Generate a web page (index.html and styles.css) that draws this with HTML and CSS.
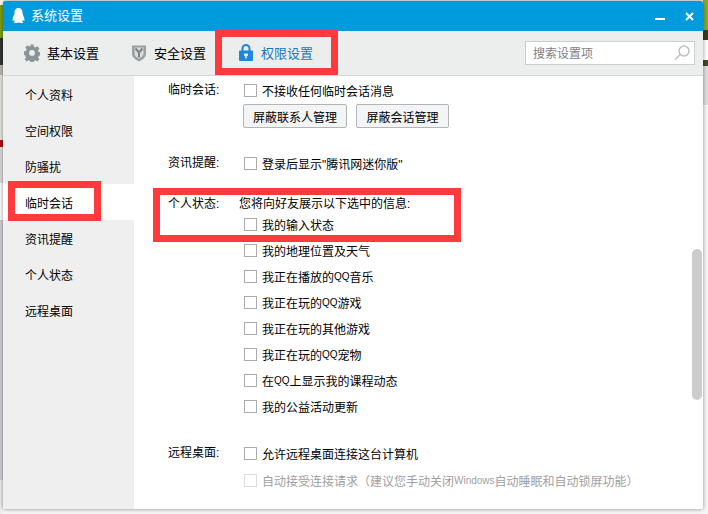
FILE: index.html
```html
<!DOCTYPE html>
<html lang="zh-CN">
<head>
<meta charset="utf-8">
<title>系统设置</title>
<link rel="stylesheet" href="styles.css">
</head>
<body>
<div class="window">
  <header class="titlebar">
    <svg class="logo" viewBox="0 0 13 15"><path d="M6.500 0C3.500 0 2.500 2.500 2.500 5 2.500 7 .5 9 .5 12c0 1.200 1 1 1.700 0 .3 1 .8 1.500.8 1.500C1.500 14 1 15 3 15c1.500 0 3-.2 3.500-.5.500.3 2 .5 3.500.5 2 0 1.500-1 0-1.500 0 0 .5-.5.800-1.500.7 1 1.700 1.200 1.700 0 0-3-2-5-2-7C10.500 2.500 9.500 0 6.500 0z"/></svg>
    <span class="title">系统设置</span>
    <span class="win-min"></span>
    <svg class="win-close" viewBox="0 0 9 9"><path d="M1 1l7 7M8 1L1 8"/></svg>
  </header>
  <nav class="toolbar">
    <a class="tab">
      <svg class="tab-icon" viewBox="0 0 16 18"><path class="gear" d="M6.500.5h3l.4 2.300 1.500.7 2-1.200 2 2.200-1.300 1.900.6 1.600 2.300.4v3l-2.300.4-.6 1.600 1.300 1.900-2 2.200-2-1.200-1.500.7-.4 2.300h-3l-.4-2.300-1.500-.7-2 1.200-2-2.200 1.300-1.900-.6-1.600L-.3 10.300v-3l2.300-.4.600-1.600L1.300 3.400l2-2.200 2 1.200 1.500-.7zM8 6a2.900 2.900 0 1 0 0 5.800A2.900 2.900 0 0 0 8 6z"/></svg>
      <span>基本设置</span>
    </a>
    <a class="tab">
      <svg class="tab-icon" viewBox="0 0 16 18"><path class="shield-o" d="M1 1.500h14v8.500c0 3-3.500 5.800-7 7.500-3.500-1.700-7-4.500-7-7.500z"/><path class="shield-i" d="M3.500 3.500h9v6.300c0 2-2.300 3.800-4.500 5-2.200-1.200-4.500-3-4.500-5z"/><path class="shield-y" d="M4.500 4.500L8 8.500l3.500-4M8 8.500v5"/></svg>
      <span>安全设置</span>
    </a>
    <a class="tab tab-active">
      <svg class="tab-icon" viewBox="0 0 16 18"><path class="lock-arc" d="M4.500 7V4.500a3.500 3.500 0 0 1 7 0V7"/><path class="lock-body" d="M2 6.500h12a1 1 0 0 1 1 1V16a1 1 0 0 1-1 1H2a1 1 0 0 1-1-1V7.500a1 1 0 0 1 1-1zM6.800 9.500a.8.8 0 0 0-.8.8v1a.8.8 0 0 0 .8.8h.4v2.400h1.600V12.100h.4a.8.8 0 0 0 .8-.8v-1a.8.8 0 0 0-.8-.8z"/></svg>
      <span>权限设置</span>
    </a>
    <div class="search">
      <span>搜索设置项</span>
      <svg class="search-icon" viewBox="0 0 16 15"><circle cx="10" cy="6" r="5"/><path d="M6.300 9.500L1 14.500"/></svg>
    </div>
  </nav>
  <div class="main">
    <aside class="sidebar">
      <div class="side-item">个人资料</div>
      <div class="side-item">空间权限</div>
      <div class="side-item">防骚扰</div>
      <div class="side-item side-active">临时会话</div>
      <div class="side-item">资讯提醒</div>
      <div class="side-item">个人状态</div>
      <div class="side-item">远程桌面</div>
    </aside>
    <section class="content">
      <div class="group group-chat">
        <div class="label">临时会话:</div>
        <div class="fields">
          <label class="opt"><i class="box"></i>不接收任何临时会话消息</label>
          <div class="buttons">
            <button class="btn btn-contact">屏蔽联系人管理</button>
            <button class="btn btn-session">屏蔽会话管理</button>
          </div>
        </div>
      </div>
      <div class="group group-news">
        <div class="label">资讯提醒:</div>
        <div class="fields">
          <label class="opt"><i class="box"></i>登录后显示"腾讯网迷你版"</label>
        </div>
      </div>
      <div class="group group-status">
        <div class="label label-short">个人状态:</div>
        <div class="fields">
          <div class="status-head">您将向好友展示以下选中的信息:</div>
          <label class="opt"><i class="box"></i>我的输入状态</label>
          <label class="opt"><i class="box"></i>我的地理位置及天气</label>
          <label class="opt"><i class="box"></i>我正在播放的<span class="latin">QQ</span>音乐</label>
          <label class="opt"><i class="box"></i>我正在玩的<span class="latin">QQ</span>游戏</label>
          <label class="opt"><i class="box"></i>我正在玩的其他游戏</label>
          <label class="opt"><i class="box"></i>我正在玩的<span class="latin">QQ</span>宠物</label>
          <label class="opt"><i class="box"></i>在<span class="latin">QQ</span>上显示我的课程动态</label>
          <label class="opt"><i class="box"></i>我的公益活动更新</label>
        </div>
      </div>
      <div class="group group-remote">
        <div class="label">远程桌面:</div>
        <div class="fields">
          <label class="opt"><i class="box"></i>允许远程桌面连接这台计算机</label>
          <label class="opt opt-disabled"><i class="box"></i>自动接受连接请求（建议您手动关闭<span class="latin">Windows</span>自动睡眠和自动锁屏功能）</label>
        </div>
      </div>
      <div class="scrollbar"></div>
    </section>
  </div>
  <div class="mark mark-tab"></div>
  <div class="mark mark-side"></div>
  <div class="mark mark-status"></div>
</div>
</body>
</html>
```

FILE: styles.css
```css
* { box-sizing: border-box; }
html, body { margin: 0; }
body {
  width: 708px;
  height: 514px;
  overflow: hidden;
  padding: 1px 5px 5px 3px;
  font-family: "Liberation Sans", "Noto Sans CJK SC", sans-serif;
  font-size: 12px;
  color: #000;
  background-color: #f6f6f6;
  background-image:
    linear-gradient(#fff 0 5px, #7f9f12 5px 38px, #333 38px 65px, #bdb9b5 65px 75px, #e6e3e0 75px 140px, #b01010 140px 147px, #dcdcdc 147px 183px, #fff 183px 220px, #cfd1d6 220px 480px, #eee 480px),
    linear-gradient(#8aa822 0 30px, #3a3c20 30px 40px, #fff 40px 60px, #44482a 60px 66px, #dedede 66px 105px, #f6f6f6 105px);
  background-repeat: no-repeat;
  background-size: 3px 100%, 5px 100%;
  background-position: left top, right top;
}
.window {
  position: relative;
  width: 700px;
  height: 508px;
  display: flex;
  flex-direction: column;
  background: #fff;
  border-radius: 2px;
  box-shadow: 0 0 4px rgba(0, 0, 0, .45);
}
.titlebar {
  flex: none;
  height: 30px;
  display: flex;
  align-items: center;
  padding: 0 9px;
  background: #009bdd;
  color: #fff;
  border-radius: 2px 2px 0 0;
}
.logo { width: 13px; height: 15px; margin-bottom: 2px; fill: #fff; }
.title { margin: 0 0 4px 6px; font-size: 13px; }
.win-min { margin: 6px 0 0 auto; width: 10px; height: 2px; background: #fff; }
.win-close { margin-left: 20px; width: 9px; height: 9px; fill: none; stroke: #fff; stroke-width: 2; }
.toolbar {
  flex: none;
  height: 45px;
  display: flex;
  align-items: center;
  padding: 0 8px 1px 21px;
  background: #eceeee;
  border-bottom: 1px solid #d4d6d6;
}
.tab {
  width: 107px;
  display: flex;
  align-items: center;
  gap: 7px;
  font-size: 13px;
  color: #000;
}
.tab-active { color: #1a76bd; }
.tab-icon { flex: none; width: 16px; height: 18px; }
.gear { fill: #8b9498; fill-rule: evenodd; }
.shield-o { fill: #9aa0a2; }
.shield-i { fill: #d8dbdb; }
.shield-y { fill: none; stroke: #7d8486; stroke-width: 2; }
.lock-arc { fill: none; stroke: #1c87dc; stroke-width: 2; }
.lock-body { fill: #1c87dc; fill-rule: evenodd; }
.search {
  margin-left: auto;
  width: 170px;
  height: 24px;
  display: flex;
  align-items: center;
  justify-content: space-between;
  padding: 0 4px 0 7px;
  border: 1px solid #cdcfcf;
  background: #fff;
  color: #808080;
}
.search-icon { width: 16px; height: 15px; fill: none; stroke: #bdbdbd; stroke-width: 1.5; }
.main { flex: 1; min-height: 0; display: flex; }
.sidebar { flex: none; width: 131px; background: #efefef; }
.side-item { height: 36px; padding: 4px 0 0 22px; line-height: 32px; }
.side-active { background: #fff; }
.content { position: relative; flex: 1; padding: 1px 0 0 34px; }
.group { display: flex; }
.group-news { margin-top: 22px; }
.group-status { margin-top: 19px; }
.group-remote { margin-top: 21px; }
.label { width: 76px; line-height: 26px; }
.label-short { line-height: 18px; }
.opt { display: flex; align-items: center; height: 26px; }
.opt-disabled { margin-top: 1px; color: #a0a0a0; }
.box {
  flex: none;
  width: 13px;
  height: 13px;
  margin-right: 5px;
  border: 1px solid #ababab;
  background: #fff;
}
.opt-disabled .box { border-color: #dcdcdc; }
.latin { font-size: 10px; }
.buttons { display: flex; gap: 9px; margin: 1px 0 0 -1px; }
.btn {
  height: 24px;
  padding: 0;
  border: 1px solid #b4b4b4;
  border-radius: 2px;
  background: #f3f4f5;
  font: inherit;
  color: #000;
}
.btn-contact { width: 104px; }
.btn-session { width: 93px; }
.status-head { height: 16px; line-height: 18px; margin-left: -5px; }
.scrollbar {
  position: absolute;
  right: 1px;
  top: 173px;
  width: 10px;
  height: 151px;
  border-radius: 5px;
  background: #cccccc;
}
.mark { position: absolute; border: 7px solid #fe3a3d; pointer-events: none; }
.mark-tab { left: 212px; top: 29px; width: 123px; height: 45px; }
.mark-side { left: 5px; top: 180px; width: 93px; height: 40px; }
.mark-status { left: 150px; top: 187px; width: 308px; height: 54px; }
```
